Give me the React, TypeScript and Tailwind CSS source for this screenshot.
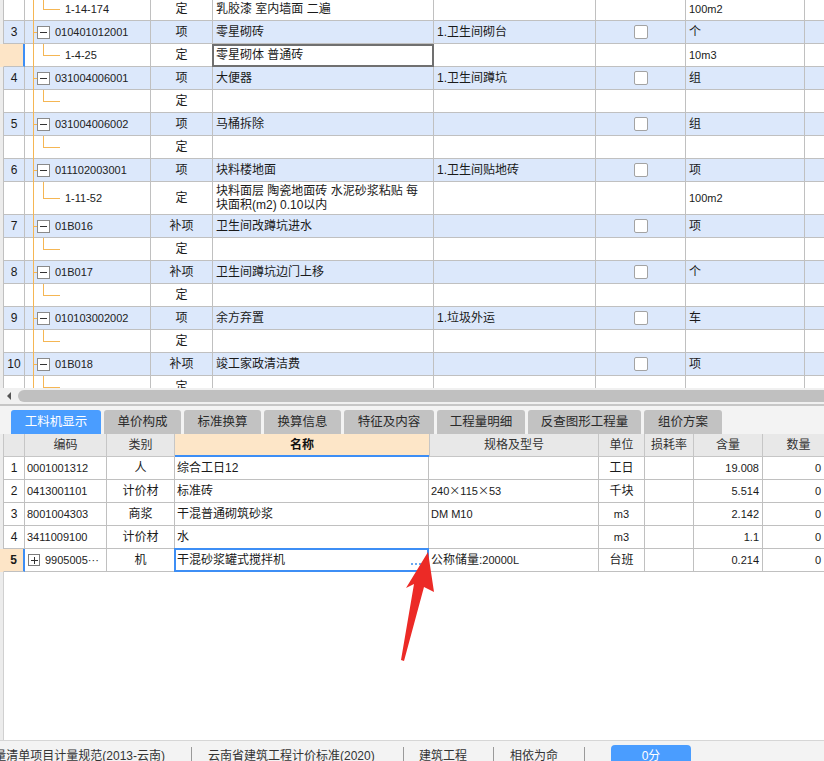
import React from 'react';

type TopRow = {
  k: 'p' | 'c';
  num?: string;
  code?: string;
  type: string;
  name?: React.ReactNode;
  feat?: string;
  unit?: string;
  sel?: boolean;
  tall?: boolean;
};

const topRows: TopRow[] = [
  { k: 'c', code: '1-14-174', type: '定', name: '乳胶漆 室内墙面 二遍', unit: '100m2' },
  { k: 'p', num: '3', code: '010401012001', type: '项', name: '零星砌砖', feat: '1.卫生间砌台', unit: '个' },
  { k: 'c', code: '1-4-25', type: '定', name: '零星砌体 普通砖', unit: '10m3', sel: true },
  { k: 'p', num: '4', code: '031004006001', type: '项', name: '大便器', feat: '1.卫生间蹲坑', unit: '组' },
  { k: 'c', type: '定' },
  { k: 'p', num: '5', code: '031004006002', type: '项', name: '马桶拆除', unit: '组' },
  { k: 'c', type: '定' },
  { k: 'p', num: '6', code: '011102003001', type: '项', name: '块料楼地面', feat: '1.卫生间贴地砖', unit: '项' },
  {
    k: 'c',
    code: '1-11-52',
    type: '定',
    name: (
      <>
        块料面层 陶瓷地面砖 水泥砂浆粘贴 每
        <br />
        块面积(m2) 0.10以内
      </>
    ),
    unit: '100m2',
    tall: true,
  },
  { k: 'p', num: '7', code: '01B016', type: '补项', name: '卫生间改蹲坑进水', unit: '项' },
  { k: 'c', type: '定' },
  { k: 'p', num: '8', code: '01B017', type: '补项', name: '卫生间蹲坑边门上移', unit: '个' },
  { k: 'c', type: '定' },
  { k: 'p', num: '9', code: '010103002002', type: '项', name: '余方弃置', feat: '1.垃圾外运', unit: '车' },
  { k: 'c', type: '定' },
  { k: 'p', num: '10', code: '01B018', type: '补项', name: '竣工家政清洁费', unit: '项' },
  { k: 'c', type: '定' },
];

function TopTableRow({ r }: { r: TopRow }) {
  const parent = r.k === 'p';
  const bg = parent ? 'bg-[#dce8fb]' : 'bg-white';
  const h = r.tall ? 'h-[33px]' : 'h-[23px]';
  const cell = `border-b border-r border-[#c0c0c0] ${h} shrink-0`;
  return (
    <div className={`flex ${bg}`}>
      <div className={`w-[3px] shrink-0 ${h} ${r.sel ? 'bg-[#fde5c7]' : 'bg-[#ececec]'}`} />
      <div
        className={`w-[22px] border-l ${r.sel ? 'border-l-[#fde5c7] bg-[#fde5c7] border-r-2 border-r-[#3d8ef5] border-b border-b-[#c0c0c0]' : 'border-l-[#c0c0c0] ' + cell} ${h} shrink-0 flex items-center justify-center text-[12px]`}
      >
        {r.num}
      </div>
      <div className={`w-[126px] ${cell} relative flex items-center`}>
        <div className="absolute left-[8px] top-0 bottom-[-1px] w-px bg-[#f5b654]" />
        {parent ? (
          <>
            <div className="absolute left-[8px] top-[11px] w-[4px] h-px bg-[#f5b654]" />
            <div className="ml-[12px] w-[13px] h-[13px] border border-[#8a8a8a] bg-white flex items-center justify-center shrink-0">
              <div className="w-[7px] h-px bg-[#333]" />
            </div>
            <span className="ml-[5px] text-[11px] text-[#222]">{r.code}</span>
          </>
        ) : (
          <>
            <div className={`absolute left-[18px] top-0 w-px bg-[#f5b654] ${r.tall ? 'h-[16px]' : 'h-[11px]'}`} />
            <div className={`absolute left-[18px] w-[17px] h-px bg-[#f5b654] ${r.tall ? 'top-[16px]' : 'top-[11px]'}`} />
            <span className="ml-[40px] text-[11px] text-[#222]">{r.code}</span>
          </>
        )}
      </div>
      <div className={`w-[62px] ${cell} flex items-center justify-center text-[12px]`}>{r.type}</div>
      <div className={`w-[221px] ${cell} relative flex items-center pl-[3px] text-[12px] leading-[14px]`}>
        {r.sel && <div className="absolute left-[-1px] top-0 right-[-1px] bottom-[-1px] border-2 border-[#707070]" />}
        <span>{r.name}</span>
      </div>
      <div className={`w-[162px] ${cell} flex items-center pl-[3px] text-[12px]`}>{r.feat}</div>
      <div className={`w-[90px] ${cell} flex items-center justify-center`}>
        {parent && <div className="w-[14px] h-[14px] rounded-[2px] border border-[#a3a3a3] bg-white" />}
      </div>
      <div className={`w-[119px] ${cell} flex items-center pl-[3px] text-[12px]`}>
        <span className={r.unit && /\d/.test(r.unit) ? 'text-[11px]' : ''}>{r.unit}</span>
      </div>
      <div className={`flex-1 border-b border-[#c0c0c0] ${h}`} />
    </div>
  );
}

type BotRow = {
  num: string;
  code: string;
  type: string;
  name: string;
  spec: React.ReactNode;
  unit: string;
  qty: string;
  sel?: boolean;
};

const X = () => <span className="font-['Noto_Sans_CJK_SC',sans-serif]">×</span>;

const botRows: BotRow[] = [
  { num: '1', code: '0001001312', type: '人', name: '综合工日12', spec: '', unit: '工日', qty: '19.008' },
  {
    num: '2',
    code: '0413001101',
    type: '计价材',
    name: '标准砖',
    spec: (
      <>
        240
        <X />
        115
        <X />
        53
      </>
    ),
    unit: '千块',
    qty: '5.514',
  },
  { num: '3', code: '8001004303', type: '商浆', name: '干混普通砌筑砂浆', spec: 'DM M10', unit: 'm3', qty: '2.142' },
  { num: '4', code: '3411009100', type: '计价材', name: '水', spec: '', unit: 'm3', qty: '1.1' },
  {
    num: '5',
    code: '9905005···',
    type: '机',
    name: '干混砂浆罐式搅拌机',
    spec: (
      <>
        <span className="text-[12px]">公称储量:</span>20000L
      </>
    ),
    unit: '台班',
    qty: '0.214',
    sel: true,
  },
];

function BotTableRow({ r }: { r: BotRow }) {
  const cell = 'border-b border-r border-[#c0c0c0] h-[23px] shrink-0';
  return (
    <div className="flex bg-white">
      <div className={`w-[3px] shrink-0 h-[23px] ${r.sel ? 'bg-[#fde5c7]' : 'bg-[#ececec]'}`} />
      <div
        className={`w-[22px] h-[23px] shrink-0 border-l flex items-center justify-center text-[12px] ${r.sel ? 'bg-[#fde5c7] border-l-[#fde5c7] border-r-2 border-r-[#3d8ef5] border-b border-b-[#c0c0c0] font-bold' : 'border-l-[#c0c0c0] ' + cell}`}
      >
        {r.num}
      </div>
      <div className={`w-[82px] ${cell} flex items-center text-[11px] text-[#222]`}>
        {r.sel ? (
          <>
            <div className="ml-[3px] w-[12px] h-[12px] border border-[#7a7a7a] bg-white flex items-center justify-center relative shrink-0">
              <div className="w-[7px] h-px bg-[#333]" />
              <div className="absolute w-px h-[7px] bg-[#333]" />
            </div>
            <span className="ml-[5px] whitespace-nowrap">{r.code}</span>
          </>
        ) : (
          <span className="ml-[2px]">{r.code}</span>
        )}
      </div>
      <div className={`w-[68px] ${cell} flex items-center justify-center text-[12px]`}>{r.type}</div>
      <div className={`w-[254px] ${cell} relative flex items-center pl-[2px] text-[12px]`}>
        {r.sel && (
          <div className="absolute left-[-1px] top-[-1px] right-[-1px] bottom-[-1px] border-2 border-[#3d8ef5] flex items-end justify-end pr-[6px] pb-[5px]">
            <div className="flex gap-[2px]">
              <div className="w-[2px] h-[2px] bg-[#6aa8f0]" />
              <div className="w-[2px] h-[2px] bg-[#6aa8f0]" />
              <div className="w-[2px] h-[2px] bg-[#6aa8f0]" />
            </div>
          </div>
        )}
        <span>{r.name}</span>
      </div>
      <div className={`w-[170px] ${cell} flex items-center pl-[2px] text-[11px]`}>
        <span>{r.spec}</span>
      </div>
      <div className={`w-[46px] ${cell} flex items-center justify-center text-[12px]`}>
        <span className={/\d/.test(r.unit) ? 'text-[11px]' : ''}>{r.unit}</span>
      </div>
      <div className={`w-[49px] ${cell}`} />
      <div className={`w-[69px] ${cell} flex items-center justify-end pr-[3px] text-[11px]`}>{r.qty}</div>
      <div className="flex-1 h-[23px] border-b border-[#c0c0c0] flex items-center justify-end pr-[3px] text-[11px]">0</div>
    </div>
  );
}

const tabs: { label: string; w: string; active?: boolean }[] = [
  { label: '工料机显示', w: 'w-[90px]', active: true },
  { label: '单价构成', w: 'w-[77px]' },
  { label: '标准换算', w: 'w-[77px]' },
  { label: '换算信息', w: 'w-[77px]' },
  { label: '特征及内容', w: 'w-[90px]' },
  { label: '工程量明细', w: 'w-[88px]' },
  { label: '反查图形工程量', w: 'w-[113px]' },
  { label: '组价方案', w: 'w-[78px]' },
];

export default function App() {
  return (
    <div className="relative w-[824px] h-[761px] overflow-hidden bg-white text-[#1a1a1a] font-['Liberation_Sans','Noto_Sans_CJK_SC',sans-serif]">
      {/* top table */}
      <div className="h-[388px] overflow-hidden">
        <div className="mt-[-2px]">
          {topRows.map((r, i) => (
            <TopTableRow key={i} r={r} />
          ))}
        </div>
      </div>
      {/* horizontal scrollbar */}
      <div className="h-[16px] bg-[#f0f0f0] flex pt-[2px]">
        <div className="w-[18px] h-[12px] flex items-center pl-[7px]">
          <div className="w-0 h-0 border-y-[4px] border-y-transparent border-r-[4px] border-r-[#555]" />
        </div>
        <div className="flex-1 h-[12px] rounded-l-full bg-[#c0c0c0]" />
      </div>
      <div className="h-[2px] bg-[#c6c6c6]" />
      {/* tabs */}
      <div className="h-[28px] bg-[#f3f3f3] flex items-end pl-[11px] gap-[3px]">
        {tabs.map((t) => (
          <div
            key={t.label}
            className={`${t.w} h-[24px] rounded-t-[3px] flex items-center justify-center text-[12.5px] ${t.active ? 'bg-[#4a9dff] text-white' : 'bg-[#c2c2c2] text-[#2a2a2a]'}`}
          >
            {t.label}
          </div>
        ))}
      </div>
      {/* bottom table */}
      <div className="h-[306px] flex flex-col">
        <div className="flex h-[23px] bg-[#e8e8e8] text-[12px] text-[#333]">
          <div className="w-[3px] shrink-0 bg-[#ececec]" />
          <div className="w-[22px] shrink-0 border-l border-r border-b border-[#c6c6c6]" />
          <div className="w-[82px] shrink-0 border-r border-b border-[#c6c6c6] flex items-center justify-center">编码</div>
          <div className="w-[68px] shrink-0 border-r border-b border-[#c6c6c6] flex items-center justify-center">类别</div>
          <div className="w-[254px] shrink-0 bg-[#fde6c8] border-b-2 border-[#3d8ef5] flex items-center justify-center font-bold text-[#111]">名称</div>
          <div className="w-[170px] shrink-0 border-l border-r border-b border-[#c6c6c6] flex items-center justify-center">规格及型号</div>
          <div className="w-[46px] shrink-0 border-r border-b border-[#c6c6c6] flex items-center justify-center">单位</div>
          <div className="w-[49px] shrink-0 border-r border-b border-[#c6c6c6] flex items-center justify-center">损耗率</div>
          <div className="w-[69px] shrink-0 border-r border-b border-[#c6c6c6] flex items-center justify-center">含量</div>
          <div className="flex-1 border-b border-[#c6c6c6] flex items-center justify-center pl-[10px]">数量</div>
        </div>
        {botRows.map((r) => (
          <BotTableRow key={r.num} r={r} />
        ))}
        <div className="flex-1 flex">
          <div className="w-[3px] bg-[#ececec]" />
          <div className="flex-1 border-l border-[#d0d0d0] bg-white" />
        </div>
      </div>
      {/* status bar */}
      <div className="h-[21px] bg-[#f3f3f3] border-t border-[#d6d6d6] flex text-[12px] text-[#333] leading-[16px]">
        <div className="w-[191px] shrink-0 overflow-hidden flex justify-end pr-[26px] pt-[7px] whitespace-nowrap">
          <span>工程量清单项目计量规范(2013-云南)</span>
        </div>
        <div className="w-px h-[14px] mt-[6px] bg-[#9a9a9a] shrink-0" />
        <div className="w-[211px] shrink-0 pl-[16px] pt-[7px] whitespace-nowrap">云南省建筑工程计价标准(2020)</div>
        <div className="w-px h-[14px] mt-[6px] bg-[#9a9a9a] shrink-0" />
        <div className="w-[89px] shrink-0 pl-[15px] pt-[7px] whitespace-nowrap">建筑工程</div>
        <div className="w-px h-[14px] mt-[6px] bg-[#9a9a9a] shrink-0" />
        <div className="w-[90px] shrink-0 pl-[16px] pt-[7px] whitespace-nowrap">相依为命</div>
        <div className="w-px h-[14px] mt-[6px] bg-[#9a9a9a] shrink-0" />
        <div className="ml-[26px] mt-[4px] w-[80px] h-[20px] rounded-t-[4px] bg-[#4a9dff] text-white flex justify-center pt-[3px]">0分</div>
      </div>
      {/* red arrow annotation */}
      <svg className="absolute left-0 top-0 pointer-events-none" width="824" height="761" viewBox="0 0 824 761">
        <polygon points="428,552 434,592 424,587 404,661 401,660 414,584 406,588" fill="#ec2a26" />
      </svg>
    </div>
  );
}
